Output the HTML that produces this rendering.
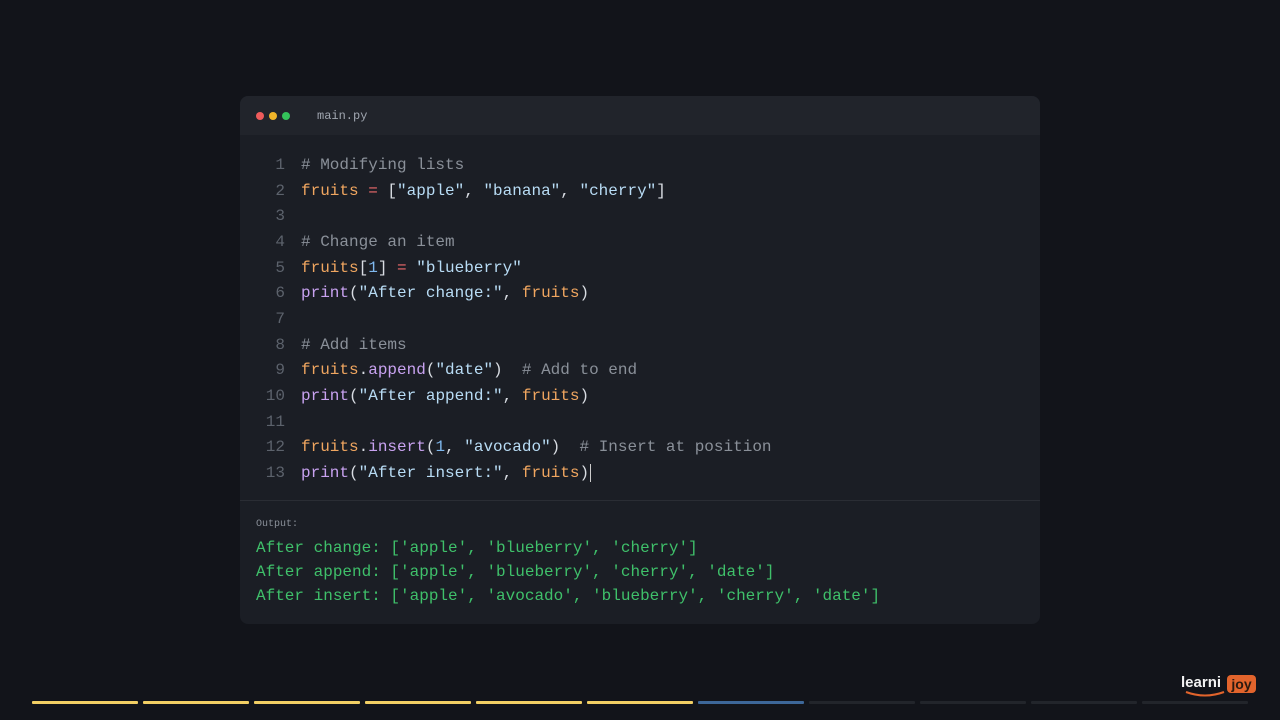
<!DOCTYPE html>
<html><head><meta charset="utf-8"><style>
*{margin:0;padding:0;box-sizing:border-box}
body{width:1280px;height:720px;background:#12141a;position:relative;overflow:hidden;font-family:"Liberation Mono",monospace}
.win{position:absolute;left:240px;top:96px;width:800px;height:528px;background:#1b1e25;border-radius:8px;overflow:hidden}
.hd{height:39px;background:#21242b;position:relative}
.dot{position:absolute;top:16px;width:8px;height:8px;border-radius:50%}
.fn{position:absolute;left:77px;top:13px;font-size:12px;color:#a0a6b0}
.code{position:absolute;left:0;top:57px;font-size:16px;color:#d8dce2}
.code div{height:25.67px;line-height:25.67px;white-space:pre}
.ln{display:inline-block;width:45px;text-align:right;color:#5c626c;margin-right:16px}
.c{color:#8a9099}.v{color:#f0a660}.o{color:#ee6b6b}.s{color:#b8dcf5}.f{color:#c8a2f0}.n{color:#7fb8ee}
.out{position:absolute;left:0;top:404px;width:800px;height:124px;border-top:1px solid #2a2d34}
.ol{position:absolute;left:16px;top:18px;font-size:10px;color:#8a9099}
.ot{position:absolute;left:16px;top:35px;font-size:16px;line-height:24px;color:#3fc06a;white-space:pre}
.bar{position:absolute;top:701px;width:106px;height:3px;border-radius:1px}
</style></head><body>
<div class="win">
<div class="hd"><div class="dot" style="left:16px;background:#ee5b5b"></div><div class="dot" style="left:29px;background:#f0b429"></div><div class="dot" style="left:42px;background:#34c25a"></div><div class="fn">main.py</div></div>
<div class="code">
<div><span class="ln">1</span><span class="c"># Modifying lists</span></div>
<div><span class="ln">2</span><span class="v">fruits</span> <span class="o">=</span> [<span class="s">"apple"</span>, <span class="s">"banana"</span>, <span class="s">"cherry"</span>]</div>
<div><span class="ln">3</span></div>
<div><span class="ln">4</span><span class="c"># Change an item</span></div>
<div><span class="ln">5</span><span class="v">fruits</span>[<span class="n">1</span>] <span class="o">=</span> <span class="s">"blueberry"</span></div>
<div><span class="ln">6</span><span class="f">print</span>(<span class="s">"After change:"</span>, <span class="v">fruits</span>)</div>
<div><span class="ln">7</span></div>
<div><span class="ln">8</span><span class="c"># Add items</span></div>
<div><span class="ln">9</span><span class="v">fruits</span>.<span class="f">append</span>(<span class="s">"date"</span>)  <span class="c"># Add to end</span></div>
<div><span class="ln">10</span><span class="f">print</span>(<span class="s">"After append:"</span>, <span class="v">fruits</span>)</div>
<div><span class="ln">11</span></div>
<div><span class="ln">12</span><span class="v">fruits</span>.<span class="f">insert</span>(<span class="n">1</span>, <span class="s">"avocado"</span>)  <span class="c"># Insert at position</span></div>
<div><span class="ln">13</span><span class="f">print</span>(<span class="s">"After insert:"</span>, <span class="v">fruits</span>)<span style="border-left:1.5px solid #ccc;margin-left:1px"></span></div>
</div>
<div class="out"><div class="ol">Output:</div><div class="ot">After change: ['apple', 'blueberry', 'cherry']
After append: ['apple', 'blueberry', 'cherry', 'date']
After insert: ['apple', 'avocado', 'blueberry', 'cherry', 'date']</div></div>
</div>
<div class="bar" style="left:32px;background:#f2cf64"></div>
<div class="bar" style="left:143px;background:#f2cf64"></div>
<div class="bar" style="left:254px;background:#f2cf64"></div>
<div class="bar" style="left:365px;background:#f2cf64"></div>
<div class="bar" style="left:476px;background:#f2cf64"></div>
<div class="bar" style="left:587px;background:#f2cf64"></div>
<div class="bar" style="left:698px;background:#3d6799"></div>
<div class="bar" style="left:809px;background:#22252b"></div>
<div class="bar" style="left:920px;background:#22252b"></div>
<div class="bar" style="left:1031px;background:#22252b"></div>
<div class="bar" style="left:1142px;background:#22252b"></div>
<div style="position:absolute;left:1181px;top:674px;font-family:'Liberation Sans',sans-serif;font-weight:bold;font-size:15px;color:#f2f2f2">learni</div>
<div style="position:absolute;left:1227px;top:675px;width:29px;height:18px;background:#e2642c;border-radius:4px;font-family:'Liberation Sans',sans-serif;font-weight:bold;font-size:14px;color:#2a1a10;text-align:center;line-height:18px">joy</div>
<svg style="position:absolute;left:1184px;top:690px" width="44" height="8"><path d="M2 2 Q21 9 40 2" stroke="#e2642c" stroke-width="2" fill="none"/></svg>
</body></html>
